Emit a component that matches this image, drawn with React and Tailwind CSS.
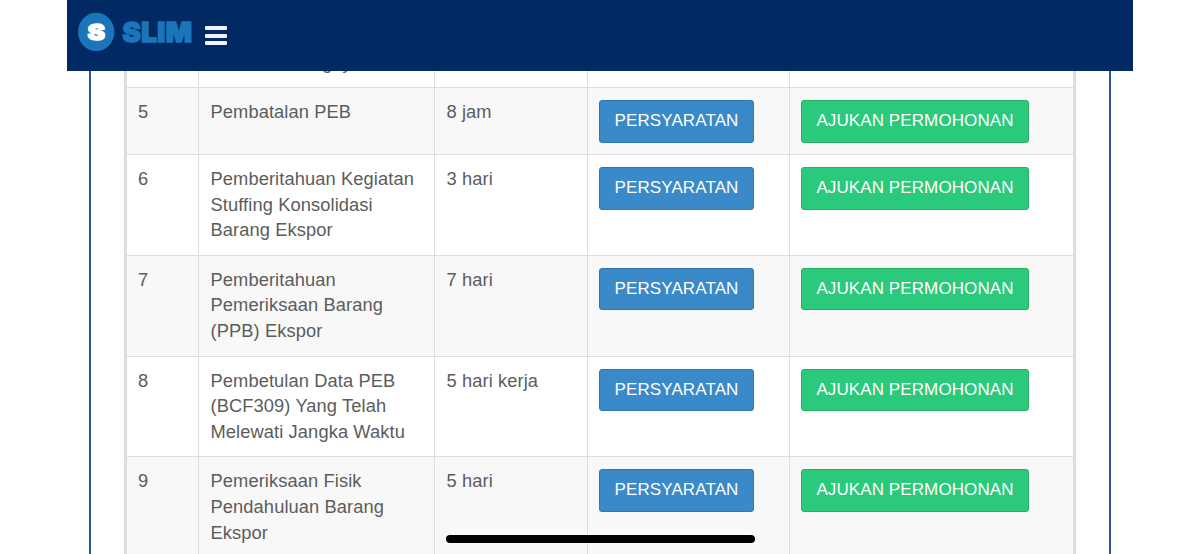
import React from 'react';

const services = [
  { no: '', name: ['Urusan Barangnya'], time: '' },
  { no: 5, name: ['Pembatalan PEB'], time: '8 jam' },
  { no: 6, name: ['Pemberitahuan Kegiatan', 'Stuffing Konsolidasi', 'Barang Ekspor'], time: '3 hari' },
  { no: 7, name: ['Pemberitahuan', 'Pemeriksaan Barang', '(PPB) Ekspor'], time: '7 hari' },
  { no: 8, name: ['Pembetulan Data PEB', '(BCF309) Yang Telah', 'Melewati Jangka Waktu'], time: '5 hari kerja' },
  { no: 9, name: ['Pemeriksaan Fisik', 'Pendahuluan Barang', 'Ekspor'], time: '5 hari' },
];

const Navbar = () => (
  <header className="absolute left-[67px] top-0 z-10 flex h-[71px] w-[1066px] bg-[#012963]">
    <svg className="ml-[11px] mt-[12px] h-[40px] w-[116px]" viewBox="0 0 116 40" aria-label="SLIM">
      <ellipse cx="18.2" cy="20" rx="18.2" ry="19.2" fill="#1b75bb" />
      <text x="9.5" y="27.5" textLength="17.5" lengthAdjust="spacingAndGlyphs" fill="#fff" stroke="#fff" strokeWidth="1.4" strokeLinejoin="round" className="font-['Inter'] text-[22px] font-black tracking-normal">S</text>
      <text x="44.5" y="30" textLength="70" lengthAdjust="spacingAndGlyphs" fill="#1b75bb" stroke="#1b75bb" strokeWidth="1.5" className="font-['Inter'] text-[27px] font-black tracking-[0.5px]">SLIM</text>
    </svg>
    <button className="ml-[11px] mt-[26px] flex h-[19px] w-[22px] flex-col justify-between" aria-label="Menu">
      <span className="h-[4px] w-full rounded-[1px] bg-[#f0f1fa]" />
      <span className="h-[4px] w-full rounded-[1px] bg-[#f0f1fa]" />
      <span className="h-[4px] w-full rounded-[1px] bg-[#f0f1fa]" />
    </button>
  </header>
);

const ServiceRow = ({ service }) => (
  <tr className={service.name.length === 1 ? 'h-[67px] align-top odd:bg-white even:bg-[#f8f8f8]' : 'h-[100.8px] align-top odd:bg-white even:bg-[#f8f8f8]'}>
    <td className="border border-[#dddddd] pl-[11px] pt-[11px]">{service.no}</td>
    <td className={service.no ? 'whitespace-nowrap border border-[#dddddd] pl-[11.5px] pt-[11px]' : 'whitespace-nowrap border border-[#dddddd] pb-[11px] pl-[9px] align-bottom'}>
      {service.name.map((line) => (
        <div key={line}>{line}</div>
      ))}
    </td>
    <td className="border border-[#dddddd] pl-[11.5px] pt-[11px]">{service.time}</td>
    <td className="border border-[#dddddd] pl-[11px] pt-[12px]">
      {service.no && (
        <button className="block h-[42.5px] w-[155px] whitespace-nowrap rounded-[3px] border border-[#3276b1] bg-[#3a89c9] text-[17px] leading-[40.5px] tracking-[0.1px] text-white">
          PERSYARATAN
        </button>
      )}
    </td>
    <td className="border border-[#dddddd] pl-[11px] pt-[12px]">
      {service.no && (
        <button className="block h-[42.5px] w-[228px] whitespace-nowrap rounded-[3px] border border-[#27ae60] bg-[#2bc97c] text-[17px] leading-[40.5px] tracking-[0.1px] text-white">
          AJUKAN PERMOHONAN
        </button>
      )}
    </td>
  </tr>
);

const App = () => {
  return (
    <div className="relative h-[554px] w-[1200px] overflow-hidden bg-white font-['Liberation_Sans',sans-serif] text-[18.3px] leading-[25.6px] tracking-[0.1px] text-[#5c5c5c]">
      <Navbar />
      <main className="ml-[89px] flex h-[700px] w-[1022px] flex-col border-x-2 border-[#2a5590] bg-white pl-[33px] pt-[20px]">
        <div className="w-[952px] border-x-2 border-[#dddddd]">
          <table className="w-full table-fixed border-collapse">
            <colgroup>
              <col className="w-[72px]" />
              <col className="w-[236px]" />
              <col className="w-[153px]" />
              <col className="w-[202px]" />
              <col />
            </colgroup>
            <tbody>
              {services.map((service) => (
                <ServiceRow key={service.name[0]} service={service} />
              ))}
            </tbody>
          </table>
        </div>
      </main>
      {/* home indicator */}
      <div className="absolute left-[446px] top-[535px] h-[8px] w-[309px] rounded-full bg-black" />
    </div>
  );
};

export default App;
